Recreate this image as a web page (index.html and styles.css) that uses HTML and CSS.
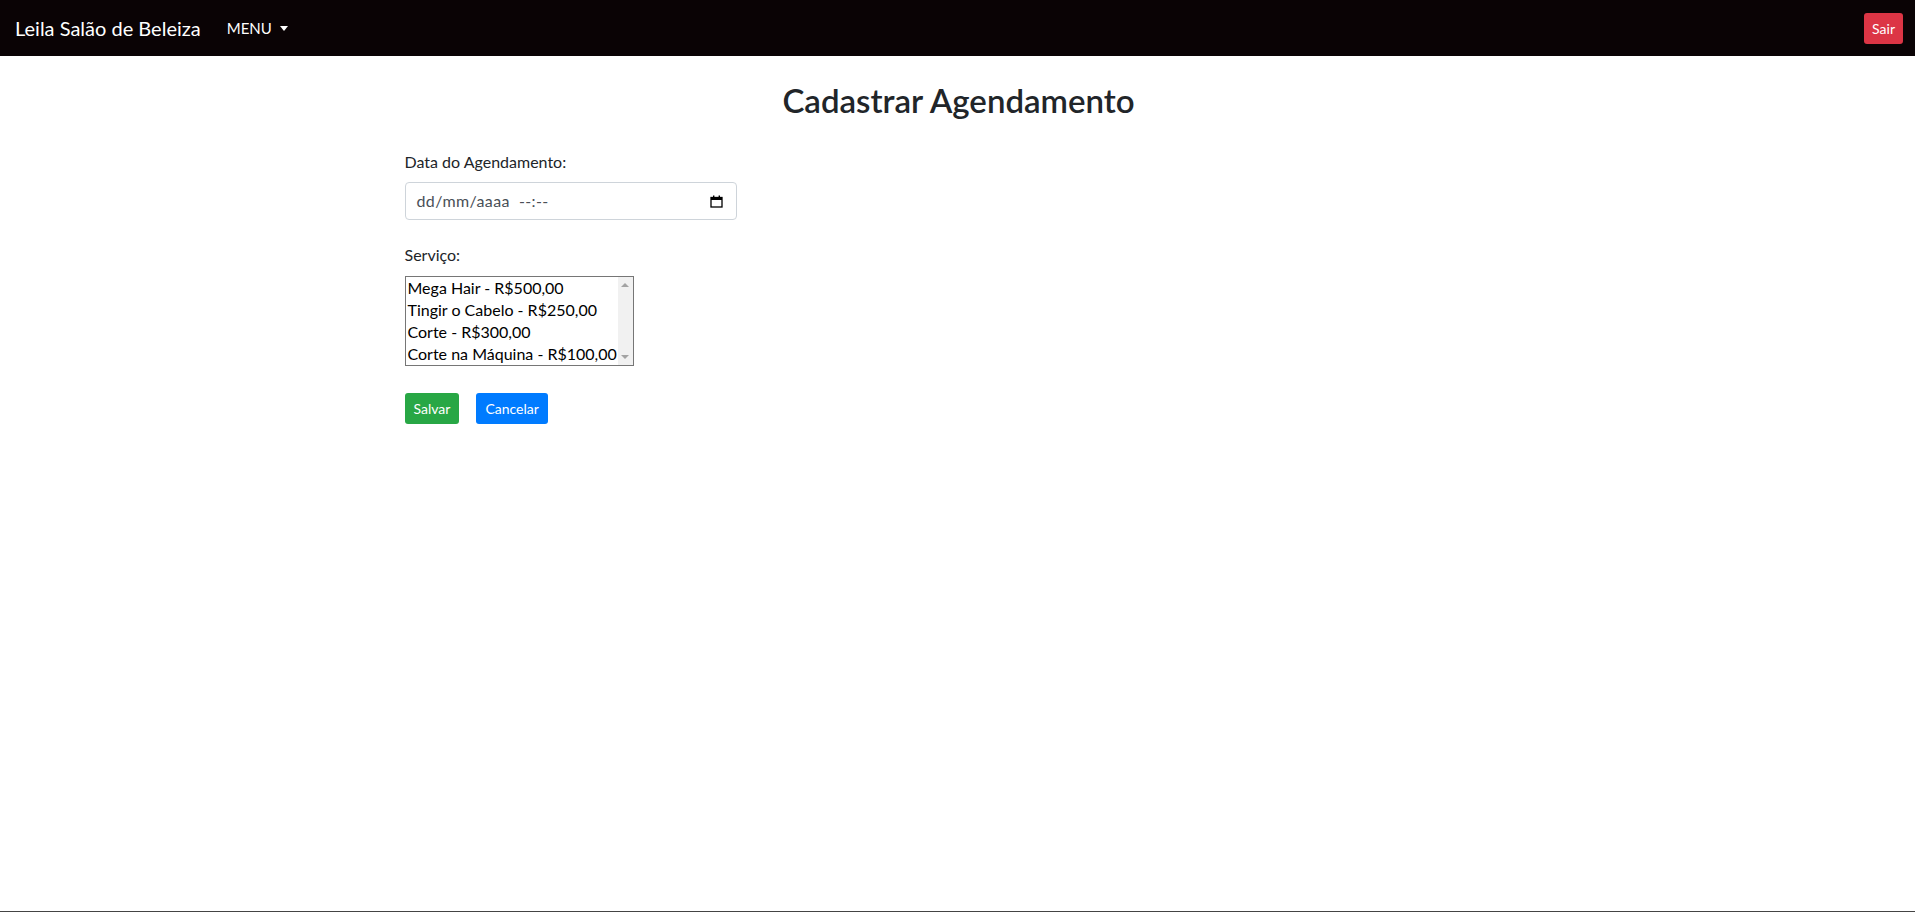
FILE: index.html
```html
<!DOCTYPE html>
<html lang="pt-BR">
<head>
    <meta charset="UTF-8">
    <title>Cadastrar Agendamento</title>
    <link rel="stylesheet" href="styles.css">
</head>
<body>
<div class="page">
    <nav class="navbar">
        <a class="brand" href="#">Leila Salão de Beleiza</a>
        <a class="nav-link dropdown" href="#">MENU</a>
        <a class="btn btn-danger sair" href="#">Sair</a>
    </nav>

    <div class="container">
        <h2 class="title">Cadastrar Agendamento</h2>

        <form class="form">
            <div class="form-group">
                <label>Data do Agendamento:</label>
                <div class="form-control date-input">
                    <span class="placeholder">dd/mm/aaaa&nbsp; --:--</span>
                    <svg class="cal" width="13" height="13" viewBox="0 0 13 13">
                        <rect x="1" y="2.5" width="11" height="9.5" fill="none" stroke="#000" stroke-width="1.3"/>
                        <rect x="1" y="2" width="11" height="3" fill="#000"/>
                        <rect x="3" y="0.5" width="1.4" height="2" fill="#000"/>
                        <rect x="8.6" y="0.5" width="1.4" height="2" fill="#000"/>
                    </svg>
                </div>
            </div>

            <div class="form-group">
                <label class="select-label">Serviço:</label>
                <div class="listbox">
                    <ul class="options">
                        <li>Mega Hair - R$500,00</li>
                        <li>Tingir o Cabelo - R$250,00</li>
                        <li>Corte - R$300,00</li>
                        <li>Corte na Máquina - R$100,00</li>
                    </ul>
                    <div class="scrollbar">
                        <span class="arrow up"></span>
                        <span class="arrow down"></span>
                    </div>
                </div>
            </div>

            <div class="actions">
                <button type="button" class="btn btn-success">Salvar</button>
                <button type="button" class="btn btn-primary">Cancelar</button>
            </div>
        </form>
    </div>

    <div class="bottom-line"></div>
</div>
</body>
</html>
```

FILE: styles.css
```css
* {
    box-sizing: border-box;
    margin: 0;
    padding: 0;
}

body {
    font-family: "Segoe UI", Lato, "Liberation Sans", sans-serif;
    font-size: 16px;
    line-height: 1.5;
    color: #212529;
    background: #fff;
}

a {
    text-decoration: none;
}

.page {
    min-height: 100vh;
    display: flex;
    flex-direction: column;
}

/* barra de cima */
.navbar {
    height: 56px;
    display: flex;
    align-items: center;
    padding: 0 12px 0 15px;
    background: #0a0305;
}

.brand {
    font-size: 20px;
    color: #fff;
    margin-right: 18px;
}

.nav-link {
    color: #fff;
    font-size: 15px;
    padding: 0 8px;
    margin-top: 1px;
}

.dropdown::after {
    content: "";
    display: inline-block;
    margin-left: 8px;
    vertical-align: 3px;
    border-top: 5px solid #fff;
    border-left: 4px solid transparent;
    border-right: 4px solid transparent;
}

.sair {
    margin-left: auto;
}

/* botoes */
.btn {
    display: inline-block;
    font-family: inherit;
    font-size: 14px;
    line-height: 21px;
    padding: 5px 8px;
    border: 0;
    border-radius: 3px;
    color: #fff;
    cursor: pointer;
}

.actions .btn {
    padding: 5px 9px;
}

.btn-danger {
    background: #dc3545;
}

.btn-success {
    background: #28a745;
}

.btn-primary {
    background: #007bff;
}

/* conteudo */
.container {
    width: 1140px;
    margin: 0 auto;
    padding: 0 15px 0 17px;
}

.title {
    text-align: center;
    font-size: 33px;
    font-weight: 600;
    line-height: 38px;
    margin-top: 25px;
    margin-bottom: 31px;
}

.form-group {
    margin-bottom: 23px;
}

.form-group label {
    display: block;
    margin-bottom: 8px;
}

.form-group .select-label {
    margin-bottom: 9px;
}

.form-control {
    height: 38px;
    border: 1px solid #ced4da;
    border-radius: 4px;
    background: #fff;
}

.date-input {
    width: 332px;
    display: flex;
    align-items: center;
    justify-content: space-between;
    padding: 0 13px 0 11px;
}

.placeholder {
    color: #495057;
    letter-spacing: 0.4px;
}

.cal {
    display: block;
}

.listbox {
    width: 229px;
    height: 90px;
    border: 1px solid #767676;
    display: flex;
}

.options {
    flex: 1;
    min-width: 0;
    list-style: none;
    padding-left: 2px;
    color: #000;
    line-height: 22px;
    white-space: nowrap;
    overflow: hidden;
}

.scrollbar {
    width: 15px;
    flex-shrink: 0;
    background: #f1f1f1;
    display: flex;
    flex-direction: column;
    justify-content: space-between;
    align-items: center;
    padding: 6px 0;
}

.arrow {
    width: 0;
    height: 0;
    border-left: 4px solid transparent;
    border-right: 4px solid transparent;
}

.arrow.up {
    border-bottom: 4px solid #a3a3a3;
}

.arrow.down {
    border-top: 4px solid #a3a3a3;
}

.actions {
    display: flex;
    gap: 17px;
    margin-top: 27px;
}

.bottom-line {
    margin-top: auto;
    height: 1px;
    background: #444;
}
```
